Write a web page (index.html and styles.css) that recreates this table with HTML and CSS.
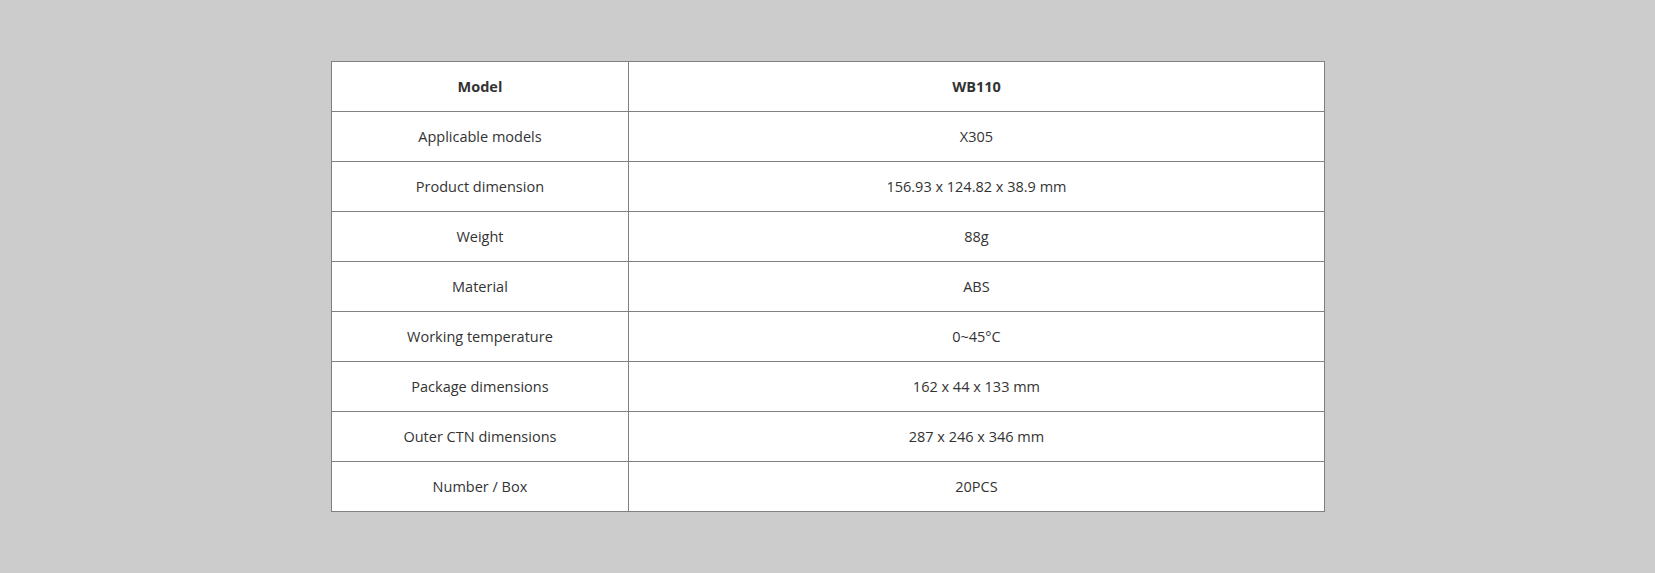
FILE: index.html
```html
<!DOCTYPE html>
<html>
<head>
<meta charset="utf-8">
<link rel="stylesheet" href="styles.css">
</head>
<body>
<table class="spec">
  <colgroup><col class="c1"><col class="c2"></colgroup>
  <tr class="head"><td>Model</td><td>WB110</td></tr>
  <tr><td>Applicable models</td><td>X305</td></tr>
  <tr><td>Product dimension</td><td>156.93 x 124.82 x 38.9 mm</td></tr>
  <tr><td>Weight</td><td>88g</td></tr>
  <tr><td>Material</td><td>ABS</td></tr>
  <tr><td>Working temperature</td><td>0~45°C</td></tr>
  <tr><td>Package dimensions</td><td>162 x 44 x 133 mm</td></tr>
  <tr><td>Outer CTN dimensions</td><td>287 x 246 x 346 mm</td></tr>
  <tr><td>Number / Box</td><td>20PCS</td></tr>
</table>
</body>
</html>
```
FILE: styles.css
```css
html, body {
  margin: 0;
  padding: 0;
  background: #cccccc;
}
body {
  padding-top: 61px;
  font-family: "Open Sans", "Noto Sans", sans-serif;
  font-size: 14.5px;
  color: #333333;
}
.spec {
  width: 994px;
  margin: 0 auto;
  border-collapse: collapse;
  background: #ffffff;
  table-layout: fixed;
}
.c1 { width: 30%; }
.c2 { width: 70%; }
.spec td {
  border: 1px solid #808080;
  height: 50px;
  padding: 0;
  box-sizing: border-box;
  text-align: center;
  vertical-align: middle;
}
.head td {
  font-weight: bold;
}
```
